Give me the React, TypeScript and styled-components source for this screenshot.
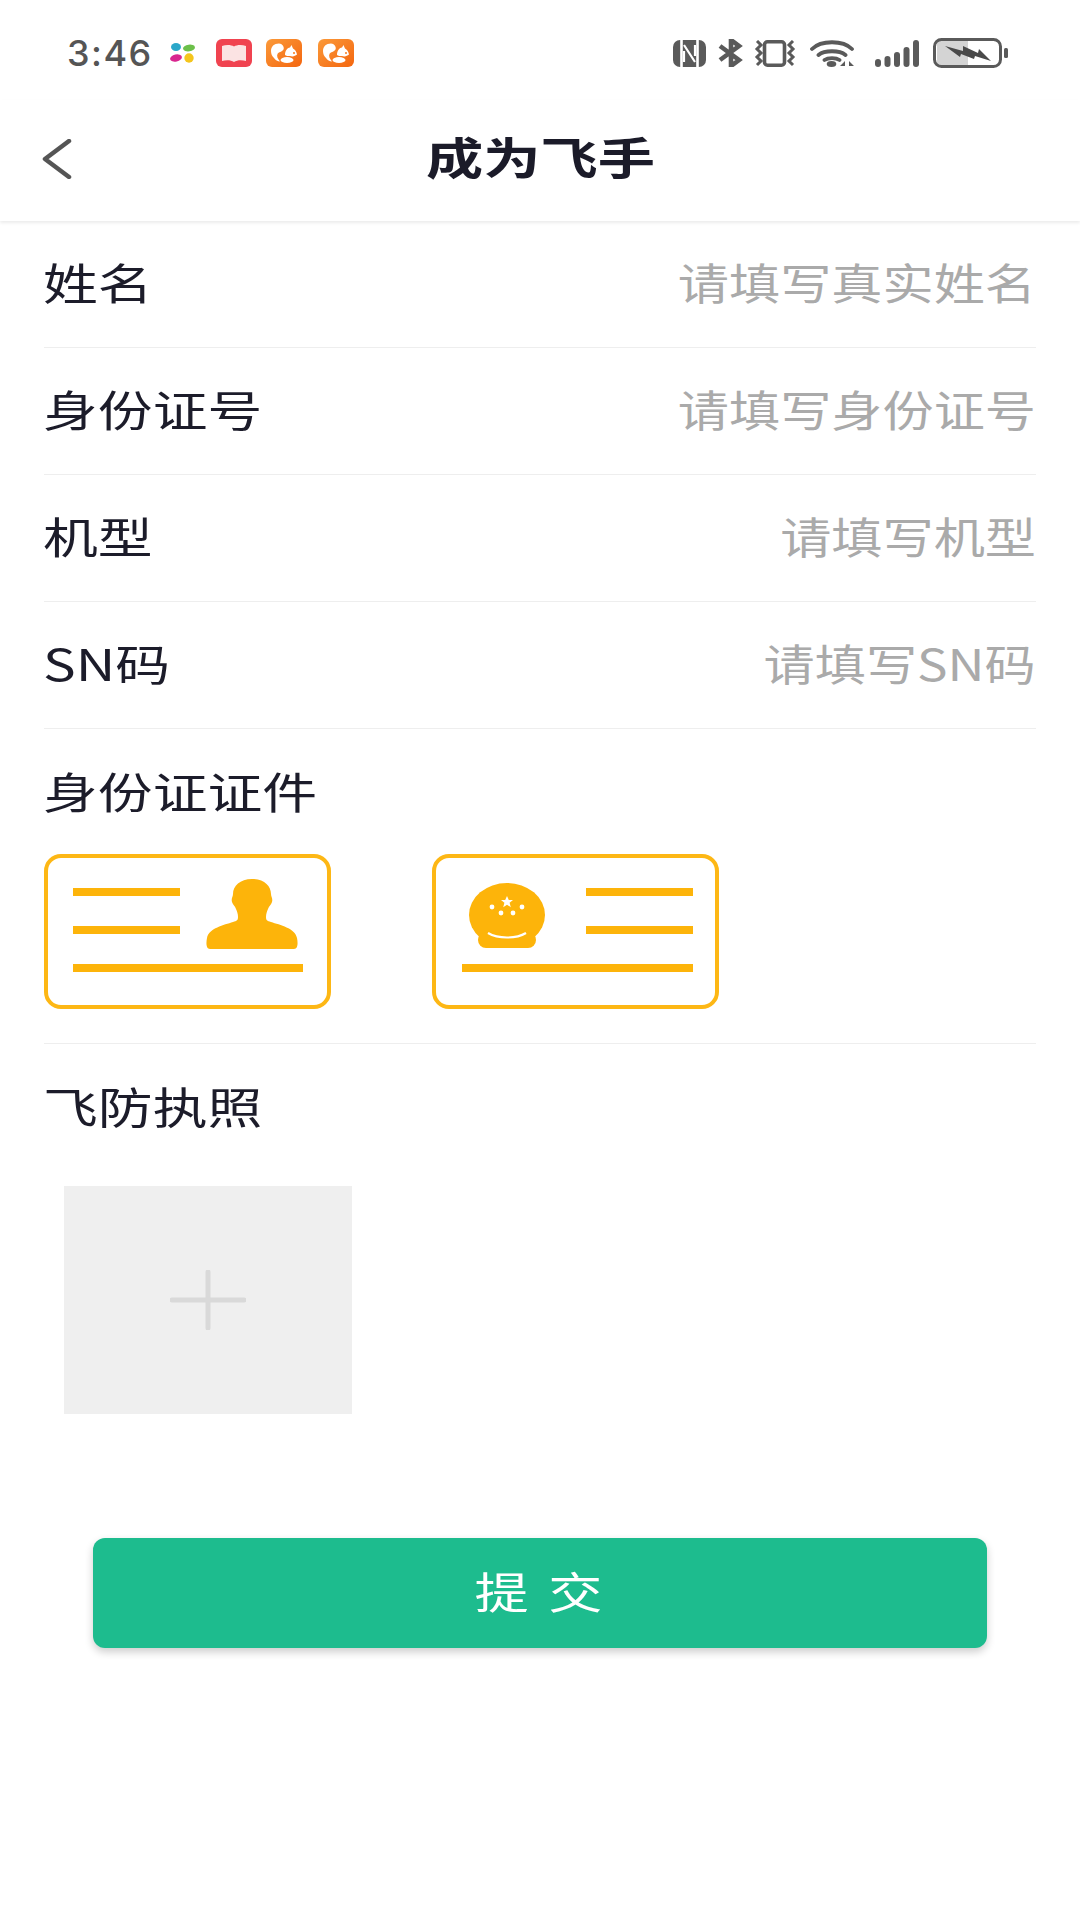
import React from "react";
import styled, { createGlobalStyle } from "styled-components";

const GlobalStyle = createGlobalStyle`
  html, body {
    margin: 0;
    padding: 0;
    background: #fff;
  }
  body {
    font-family: "Noto Sans CJK SC", "Noto Sans", sans-serif;
  }
`;

const rows = [
  { label: "姓名", placeholder: "请填写真实姓名" },
  { label: "身份证号", placeholder: "请填写身份证号" },
  { label: "机型", placeholder: "请填写机型" },
  { label: "SN码", placeholder: "请填写SN码" },
];

const Squirrel: React.FC<{ id: string }> = ({ id }) => (
  <AppIcon viewBox="0 0 36 28">
    <defs>
      <linearGradient id={id} x1="0" y1="0" x2="1" y2="1">
        <stop offset="0" stopColor="#fb9a3a" />
        <stop offset="1" stopColor="#f4660f" />
      </linearGradient>
    </defs>
    <rect width="36" height="28" rx="6" fill={`url(#${id})`} />
    <path d="M13 4.500c-5 0-8 3-8 7.500 0 3 1 5 3 7 1.500 2 3.500 3.500 6 3.500-2.500-3-3.500-5.500-2.500-7.500 1-2 4.500-2 6-4.500 1.200-2.500-1.500-6-4.500-6z" fill="#fff" />
    <path d="M19 16c0-4 2-7 5-7.500l1.500-2.500 1.500 3.500c2 1 3.500 3 4 6-2 1.500-4 2.500-7 1.500-2 0-4 0-5-1z" fill="#fff" />
    <ellipse cx="21" cy="21" rx="6.500" ry="3" fill="#fff" />
    <circle cx="28" cy="14" r="1" fill="#f67a1c" />
  </AppIcon>
);

const App: React.FC = () => (
  <Page>
    <GlobalStyle />
    <StatusBar>
      <StatusGroup>
        <Clock>3:46</Clock>
        <PetalIcon viewBox="0 0 25 20">
          <ellipse cx="6" cy="4" rx="5" ry="4" fill="#2aa7c9" />
          <ellipse cx="19" cy="5" rx="6" ry="3.300" fill="#6cc04a" transform="rotate(-8 19 5)" />
          <ellipse cx="6" cy="15" rx="6" ry="3.500" fill="#d9268f" transform="rotate(-12 6 15)" />
          <ellipse cx="19" cy="15" rx="4.700" ry="4.700" fill="#f4c51c" />
        </PetalIcon>
        <BookIcon viewBox="0 0 36 28">
          <rect width="36" height="28" rx="6" fill="#f04350" />
          <path d="M6 7c4-1.500 9-1.500 12 .5 3-2 8-2 12-.5v15c-4-1-9-1-12 1-3-2-8-2-12-1z" fill="#fbe3e3" />
        </BookIcon>
        <Squirrel id="uc-a" />
        <Squirrel id="uc-b" />
      </StatusGroup>
      <StatusGroup $right>
        <SysIcon viewBox="0 0 33 27" $w={33} $h={27} $mr={12}>
          <rect width="33" height="27" rx="7" fill="#5a5a5a" />
          <path d="M8.500 0v27M24.500 0v27" stroke="#fff" strokeWidth="2.600" />
          <path d="M11 5l11 17M11 11v11M22 5v11" fill="none" stroke="#fff" strokeWidth="2.200" />
        </SysIcon>
        <SysIcon viewBox="0 0 25 28" $w={25} $h={28} $mr={11}>
          <path d="M2 7l19 14-8 6V1l8 6L2 21" fill="none" stroke="#5a5a5a" strokeWidth="4.600" />
        </SysIcon>
        <SysIcon viewBox="0 0 42 27" $w={42} $h={27} $mr={14}>
          <rect x="10.500" y="1.800" width="20" height="23.400" rx="3" fill="none" stroke="#5a5a5a" strokeWidth="3.600" />
          <path d="M3 1l4 4-4 4 4 4-4 4 4 4-4 4M39 1l-4 4 4 4-4 4 4 4-4 4 4 4" fill="none" stroke="#5a5a5a" strokeWidth="3" />
        </SysIcon>
        <SysIcon viewBox="0 0 46 27" $w={46} $h={27} $mr={19}>
          <path d="M2 9C11 0 33 0 42 9M8.500 15c6-5 21-5 27 0M14.500 20c3.500-2.500 11.500-2.500 15 0" fill="none" stroke="#5a5a5a" strokeWidth="3.800" strokeLinecap="round" />
          <ellipse cx="21.500" cy="24" rx="4.800" ry="3" fill="#5a5a5a" />
          <path d="M35 26h-5l5-5zM39 21l5 5h-5z" fill="#5a5a5a" />
        </SysIcon>
        <SysIcon viewBox="0 0 44 27" $w={44} $h={27} $mr={14}>
          <rect x="0" y="19" width="6" height="8" rx="3" fill="#5a5a5a" />
          <rect x="9.500" y="16" width="6" height="11" rx="3" fill="#5a5a5a" />
          <rect x="19" y="12" width="6" height="15" rx="3" fill="#5a5a5a" />
          <rect x="28.500" y="7" width="6" height="20" rx="3" fill="#5a5a5a" />
          <rect x="38" y="0" width="6" height="27" rx="3" fill="#5a5a5a" />
        </SysIcon>
        <SysIcon viewBox="0 0 75 30" $w={75} $h={30} $mr={0}>
          <rect x="4" y="3" width="31" height="24" fill="#d4d4d4" />
          <rect x="1.500" y="1.500" width="66" height="27" rx="7" fill="none" stroke="#5a5a5a" strokeWidth="3" />
          <path d="M12 8l18 5 0-5 15 7 1-4 12 12-16-5-1 3-13-5-1 3z" fill="#4a4a4a" />
          <rect x="71" y="10" width="4" height="10" rx="1.500" fill="#5a5a5a" />
        </SysIcon>
      </StatusGroup>
    </StatusBar>

    <Header>
      <BackIcon viewBox="0 0 30 40">
        <path d="M27 2L3 20l24 18" fill="none" stroke="#555" strokeWidth="4.500" strokeLinecap="round" strokeLinejoin="round" />
      </BackIcon>
      <Title>成为飞手</Title>
      <span />
    </Header>

    <Form>
      {rows.map((row) => (
        <Row key={row.label}>
          <Label>{row.label}</Label>
          <Placeholder>{row.placeholder}</Placeholder>
        </Row>
      ))}

      <Section $bordered>
        <Label>身份证证件</Label>
        <CardRow>
          <IdCard viewBox="0 0 287 155">
            <rect x="2" y="2" width="283" height="151" rx="15" fill="none" stroke="#fdb715" strokeWidth="4" />
            <rect x="29" y="34" width="107" height="8" fill="#fdb40a" />
            <rect x="29" y="72" width="107" height="8" fill="#fdb40a" />
            <rect x="29" y="110" width="230" height="8" fill="#fdb40a" />
            <path d="M208 25c12 0 19 7 19 15 0 3 2 4 1 8-1 3-3 4-4 7-1 2-2 5-2 8 0 3 1 4 5 5 9 3 24 6 26 16 1 5 1 11-3 11h-84c-4 0-4-6-3-11 2-10 17-13 26-16 4-1 5-2 5-5 0-3-1-6-2-8-1-3-3-4-4-7-1-4 1-5 1-8 0-8 7-15 19-15z" fill="#fdb40a" />
          </IdCard>
          <IdCard viewBox="0 0 287 155">
            <rect x="2" y="2" width="283" height="151" rx="15" fill="none" stroke="#fdb715" strokeWidth="4" />
            <rect x="154" y="34" width="107" height="8" fill="#fdb40a" />
            <rect x="154" y="72" width="107" height="8" fill="#fdb40a" />
            <rect x="30" y="110" width="231" height="8" fill="#fdb40a" />
            <ellipse cx="75" cy="61" rx="38" ry="32" fill="#fdb40a" />
            <rect x="46" y="78" width="58" height="16" rx="8" fill="#fdb40a" />
            <path d="M56 79c10 6 28 6 38 0" fill="none" stroke="#fff" strokeWidth="2.200" />
            <path d="M75 42l1.800 4h4.200l-3.400 2.800 1.200 4.400-3.800-2.500-3.800 2.500 1.200-4.400L69 46h4.200z" fill="#fff" />
            <circle cx="60" cy="53" r="2.400" fill="#fff" />
            <circle cx="90" cy="53" r="2.400" fill="#fff" />
            <circle cx="69" cy="59" r="2.400" fill="#fff" />
            <circle cx="81" cy="59" r="2.400" fill="#fff" />
          </IdCard>
        </CardRow>
      </Section>

      <Section>
        <Label>飞防执照</Label>
        <UploadBox>
          <PlusIcon viewBox="0 0 76 60">
            <path d="M2 30h72M38 2v56" stroke="#d9d9d9" strokeWidth="5" strokeLinecap="round" />
          </PlusIcon>
        </UploadBox>
      </Section>
    </Form>

    <SubmitButton>
      <SubmitText>提 交</SubmitText>
    </SubmitButton>
  </Page>
);

export default App;

const Page = styled.div`
  width: 1080px;
  min-height: 1920px;
  background: #fff;
  color: #1c1c2a;
  overflow: hidden;
`;

const StatusBar = styled.div`
  box-sizing: border-box;
  height: 100px;
  padding: 6px 72px 0 67px;
  display: flex;
  align-items: center;
  justify-content: space-between;
`;

const StatusGroup = styled.div<{ $right?: boolean }>`
  display: flex;
  align-items: center;
  gap: ${(p) => (p.$right ? 0 : 14)}px;
`;

const Clock = styled.span`
  font-family: "Inter", "Liberation Sans", sans-serif;
  font-size: 36px;
  font-weight: 500;
  line-height: 40px;
  color: #555;
  width: 89px;
  letter-spacing: 1.5px;
  white-space: nowrap;
`;

const AppIcon = styled.svg`
  width: 36px;
  height: 28px;
  margin-right: 2px;
`;

const PetalIcon = styled.svg`
  width: 25px;
  height: 20px;
  margin-right: 7px;
`;

const BookIcon = styled.svg`
  width: 36px;
  height: 28px;
`;

const SysIcon = styled.svg<{ $w: number; $h: number; $mr: number }>`
  width: ${(p) => p.$w}px;
  height: ${(p) => p.$h}px;
  margin-right: ${(p) => p.$mr}px;
`;

const Header = styled.div`
  box-sizing: border-box;
  height: 121px;
  padding: 0 42px 4px;
  display: grid;
  grid-template-columns: 1fr auto 1fr;
  align-items: center;
  background: #fff;
  box-shadow: 0 2px 3px rgba(0, 0, 0, 0.08);
`;

const BackIcon = styled.svg`
  width: 30px;
  height: 40px;
`;

const Title = styled.h1`
  margin: 0 0 6px;
  width: 227px;
  text-align: center;
  font-size: 44px;
  line-height: 60px;
  font-weight: 700;
  color: #1b1b29;
  white-space: nowrap;
  transform: scaleX(1.3);
`;

const Form = styled.div`
  margin: 0 44px;
`;

const Row = styled.div`
  box-sizing: border-box;
  height: 127px;
  padding-bottom: 7px;
  display: flex;
  align-items: center;
  justify-content: space-between;
  border-bottom: 1px solid #eeeeee;
`;

const Label = styled.div`
  margin-left: -1px;
  font-size: 43px;
  line-height: 56px;
  color: #1c1c2a;
  white-space: nowrap;
  transform: scaleX(1.275);
  transform-origin: left center;
`;

const Placeholder = styled.div`
  font-size: 43px;
  line-height: 56px;
  color: #aaaaaa;
  white-space: nowrap;
  transform: scaleX(1.19);
  transform-origin: right center;
`;

const Section = styled.div<{ $bordered?: boolean }>`
  padding: 33px 0 ${(p) => (p.$bordered ? 34 : 0)}px;
  border-bottom: ${(p) => (p.$bordered ? "1px solid #eeeeee" : "none")};
`;

const CardRow = styled.div`
  margin-top: 36px;
  display: flex;
  gap: 101px;
`;

const IdCard = styled.svg`
  width: 287px;
  height: 155px;
  display: block;
`;

const UploadBox = styled.div`
  width: 288px;
  height: 228px;
  margin: 53px 0 0 20px;
  background: #efefef;
  display: flex;
  align-items: center;
  justify-content: center;
`;

const PlusIcon = styled.svg`
  width: 76px;
  height: 60px;
`;

const SubmitButton = styled.button`
  display: flex;
  align-items: center;
  justify-content: center;
  width: 894px;
  height: 110px;
  margin: 124px 0 0 93px;
  padding: 0 0 6px;
  border: none;
  border-radius: 12px;
  background: #1dbc8e;
  box-shadow: 0 4px 8px rgba(0, 0, 0, 0.2);
  font-family: inherit;
`;

const SubmitText = styled.span`
  font-size: 43px;
  line-height: 56px;
  color: #fff;
  white-space: pre;
  letter-spacing: 3px;
  transform: scaleX(1.26);
`;
